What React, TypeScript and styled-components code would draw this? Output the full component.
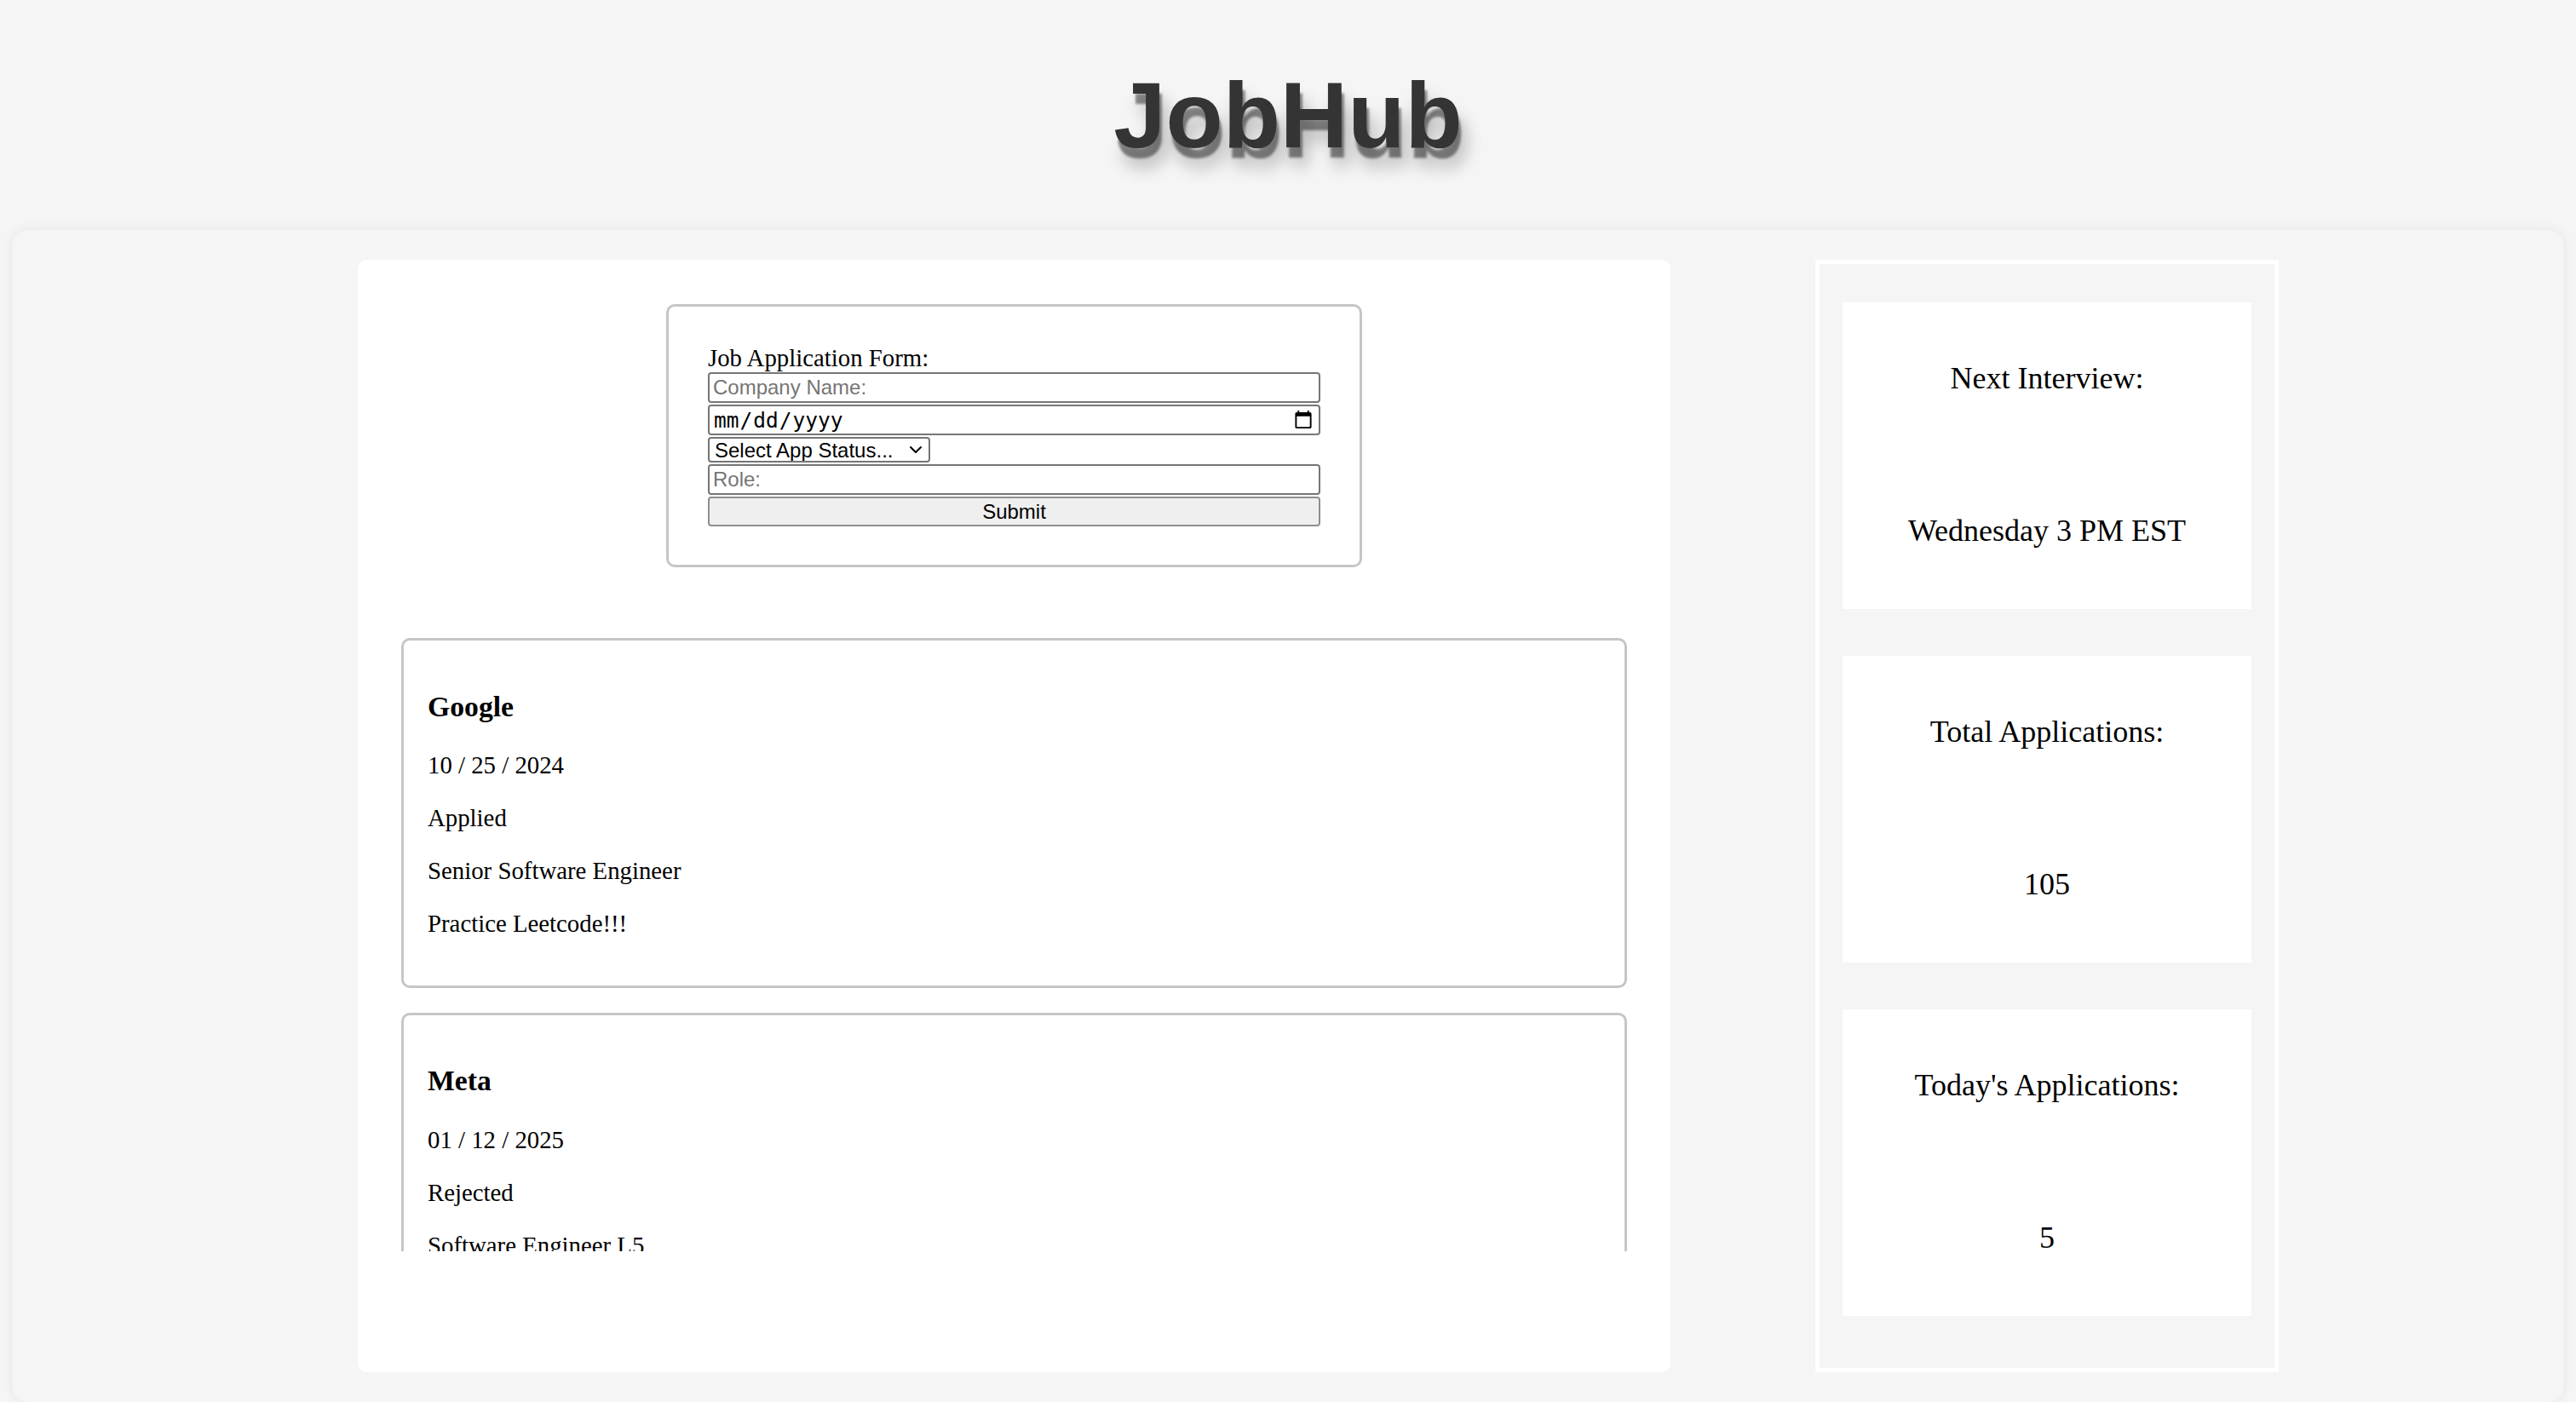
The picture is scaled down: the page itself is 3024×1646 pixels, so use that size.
import React from "react";
import styled, { createGlobalStyle } from "styled-components";

const GlobalStyle = createGlobalStyle`
  html, body {
    margin: 0;
    padding: 0;
    background: #f4f5f4;
    font-family: "Liberation Serif", "Times New Roman", serif;
    color: #000;
  }
  * { box-sizing: border-box; }
`;

const Page = styled.div`
  width: 3024px;
  min-height: 1646px;
  background: #f4f5f4;
  overflow: hidden;
`;

const Header = styled.header`
  height: 270px;
  padding-top: 72px;
  text-align: center;
`;

const Title = styled.h1`
  margin: 0;
  font-family: "Liberation Sans", Arial, sans-serif;
  font-weight: 700;
  font-size: 110px;
  line-height: 126px;
  color: #353435;
  text-shadow: 3px 12px 3px rgba(0, 0, 0, 0.45), 8px 22px 20px rgba(0, 0, 0, 0.28);
`;

const Main = styled.main`
  margin: 0 14px;
  height: 1376px;
  padding: 35px 0 35px 406px;
  border-radius: 20px;
  background: #f4f5f4;
  box-shadow: 0 0 14px rgba(0, 0, 0, 0.07);
  display: flex;
  align-items: flex-start;
  gap: 170px;
`;

const Panel = styled.section`
  width: 1541px;
  height: 1306px;
  background: #fff;
  border-radius: 11px;
  padding: 52px 51px 0;
  display: flex;
  flex-direction: column;
  align-items: center;
`;

const FormBox = styled.form`
  width: 817px;
  border: 3px solid #c6c6c6;
  border-radius: 10px;
  padding: 44px 45px 45px 46px;
  display: flex;
  flex-direction: column;
  align-items: flex-start;
  gap: 2px;
`;

const FormLabel = styled.label`
  font-family: "Liberation Serif", "Times New Roman", serif;
  font-size: 28.8px;
  line-height: 33px;
  margin-bottom: -2px;
`;

const TextInput = styled.input`
  width: 719px;
  height: 36px;
  border: 2px solid #767676;
  border-radius: 4px;
  padding: 2px 4px;
  font-family: "Liberation Sans", Arial, sans-serif;
  font-size: 24px;
  color: #000;
  background: #fff;
  &::placeholder { color: #757575; }
`;

const DateInput = styled(TextInput)`
  font-family: "DejaVu Sans Mono", "Liberation Mono", monospace;
  font-size: 24.5px;
`;

const SelectWrap = styled.div`
  position: relative;
  width: 261px;
  height: 30px;
`;

const Select = styled.select`
  appearance: none;
  -webkit-appearance: none;
  width: 100%;
  height: 100%;
  border: 2px solid #767676;
  border-radius: 4px;
  padding: 0 4px 0 6px;
  font-family: "Liberation Sans", Arial, sans-serif;
  font-size: 24px;
  color: #000;
  background: #fff;
`;

const Chevron = styled.svg`
  position: absolute;
  right: 9px;
  top: 9px;
  width: 16px;
  height: 12px;
  pointer-events: none;
`;

const SubmitButton = styled.button`
  width: 719px;
  height: 35px;
  border: 2px solid #8f8f8f;
  border-radius: 4px;
  background: #efefef;
  font-family: "Liberation Sans", Arial, sans-serif;
  font-size: 24px;
  color: #000;
`;

const ListArea = styled.div`
  align-self: stretch;
  margin-top: 83px;
  height: 720px;
  overflow: hidden;
  display: flex;
  flex-direction: column;
  gap: 29px;
`;

const JobCard = styled.article`
  flex-shrink: 0;
  border: 3px solid #c6c6c6;
  border-radius: 10px;
  padding: 25px 30px 27px 28px;
`;

const Company = styled.h3`
  margin: 33.7px 0;
  font-size: 33.7px;
  font-weight: 700;
`;

const Line = styled.p`
  margin: 28.8px 0;
  font-size: 28.8px;
`;

const Sidebar = styled.aside`
  width: 544px;
  height: 1306px;
  border: 5px solid #fff;
  padding: 45px 27px;
  display: flex;
  flex-direction: column;
  gap: 55px;
`;

const StatCard = styled.div`
  height: 360px;
  background: #fff;
  padding: 69px 0 71px;
  display: flex;
  flex-direction: column;
  align-items: center;
  justify-content: space-between;
  font-size: 36px;
  line-height: 41px;
`;

const StatText = styled.div``;

const jobs = [
  {
    company: "Google",
    date: "10 / 25 / 2024",
    status: "Applied",
    role: "Senior Software Engineer",
    notes: "Practice Leetcode!!!",
  },
  {
    company: "Meta",
    date: "01 / 12 / 2025",
    status: "Rejected",
    role: "Software Engineer L5",
    notes: "",
  },
];

const stats = [
  { label: "Next Interview:", value: "Wednesday 3 PM EST" },
  { label: "Total Applications:", value: "105" },
  { label: "Today's Applications:", value: "5" },
];

export default function App() {
  return (
    <Page>
      <GlobalStyle />
      <Header>
        <Title>JobHub</Title>
      </Header>
      <Main>
        <Panel>
          <FormBox onSubmit={(e) => e.preventDefault()}>
            <FormLabel>Job Application Form:</FormLabel>
            <TextInput type="text" placeholder="Company Name:" />
            <DateInput type="date" />
            <SelectWrap>
              <Select defaultValue="">
                <option value="">Select App Status...</option>
                <option value="applied">Applied</option>
                <option value="interview">Interview</option>
                <option value="rejected">Rejected</option>
                <option value="offer">Offer</option>
              </Select>
              <Chevron viewBox="0 0 16 12" fill="none" stroke="#000" strokeWidth="2" strokeLinecap="round" strokeLinejoin="round">
                <path d="M2 3 L8 9 L14 3" />
              </Chevron>
            </SelectWrap>
            <TextInput type="text" placeholder="Role:" />
            <SubmitButton type="submit">Submit</SubmitButton>
          </FormBox>
          <ListArea>
            {jobs.map((job) => (
              <JobCard key={job.company}>
                <Company>{job.company}</Company>
                <Line>{job.date}</Line>
                <Line>{job.status}</Line>
                <Line>{job.role}</Line>
                {job.notes && <Line>{job.notes}</Line>}
              </JobCard>
            ))}
          </ListArea>
        </Panel>
        <Sidebar>
          {stats.map((s) => (
            <StatCard key={s.label}>
              <StatText>{s.label}</StatText>
              <StatText>{s.value}</StatText>
            </StatCard>
          ))}
        </Sidebar>
      </Main>
    </Page>
  );
}
